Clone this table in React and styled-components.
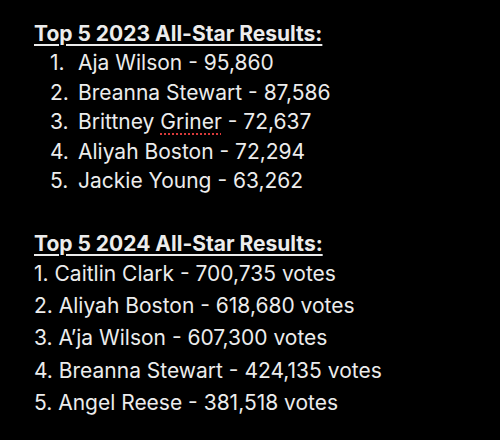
import React from "react";
import styled, { createGlobalStyle } from "styled-components";

const GlobalStyle = createGlobalStyle`
  html, body {
    margin: 0;
    padding: 0;
    background: #000;
  }
  body {
    font-family: Inter, "Open Sans", "Liberation Sans", sans-serif;
    color: #ececec;
  }
`;

const Page = styled.div`
  width: 500px;
  height: 440px;
  background: #000;
  padding: 19px 0 0 34px;
  box-sizing: border-box;
`;

const Section = styled.section`
  margin-bottom: ${(p) => p.$gap || 0}px;
`;

const Title = styled.h2`
  margin: 0;
  font-size: 21px;
  font-weight: 700;
  line-height: 29px;
  text-decoration: underline;
  text-decoration-thickness: 2px;
  text-underline-offset: 3px;
`;

const List = styled.ol`
  list-style: none;
  margin: 0;
  padding: 0 0 0 ${(p) => p.$indent || 0}px;
`;

const Item = styled.li`
  display: flex;
  font-size: 21px;
  line-height: ${(p) => p.$line}px;
  white-space: pre;
`;

const Num = styled.span`
  width: 28px;
  flex: none;
`;

const Misspelled = styled.span`
  text-decoration: underline dotted #d93a3a;
  text-decoration-thickness: 2px;
  text-underline-offset: 4px;
`;

const results2023 = [
  ["Aja Wilson", "95,860"],
  ["Breanna Stewart", "87,586"],
  [<Misspelled>Griner</Misspelled>, "72,637", "Brittney "],
  ["Aliyah Boston", "72,294"],
  ["Jackie Young", "63,262"],
];

const results2024 = [
  ["Caitlin Clark", "700,735"],
  ["Aliyah Boston", "618,680"],
  ["A’ja Wilson", "607,300"],
  ["Breanna Stewart", "424,135"],
  ["Angel Reese", "381,518"],
];

export default function App() {
  return (
    <>
      <GlobalStyle />
      <Page>
        <Section $gap={33}>
          <Title>Top 5 2023 All-Star Results:</Title>
          <List $indent={16}>
            {results2023.map(([name, votes, prefix], i) => (
              <Item key={i} $line={29.6}>
                <Num>{i + 1}.</Num>
                <span>
                  {prefix}
                  {name} - {votes}
                </span>
              </Item>
            ))}
          </List>
        </Section>
        <Section>
          <Title>Top 5 2024 All-Star Results:</Title>
          <List>
            {results2024.map(([name, votes], i) => (
              <Item key={i} $line={32.2}>
                {`${i + 1}. ${name} - ${votes} votes`}
              </Item>
            ))}
          </List>
        </Section>
      </Page>
    </>
  );
}
